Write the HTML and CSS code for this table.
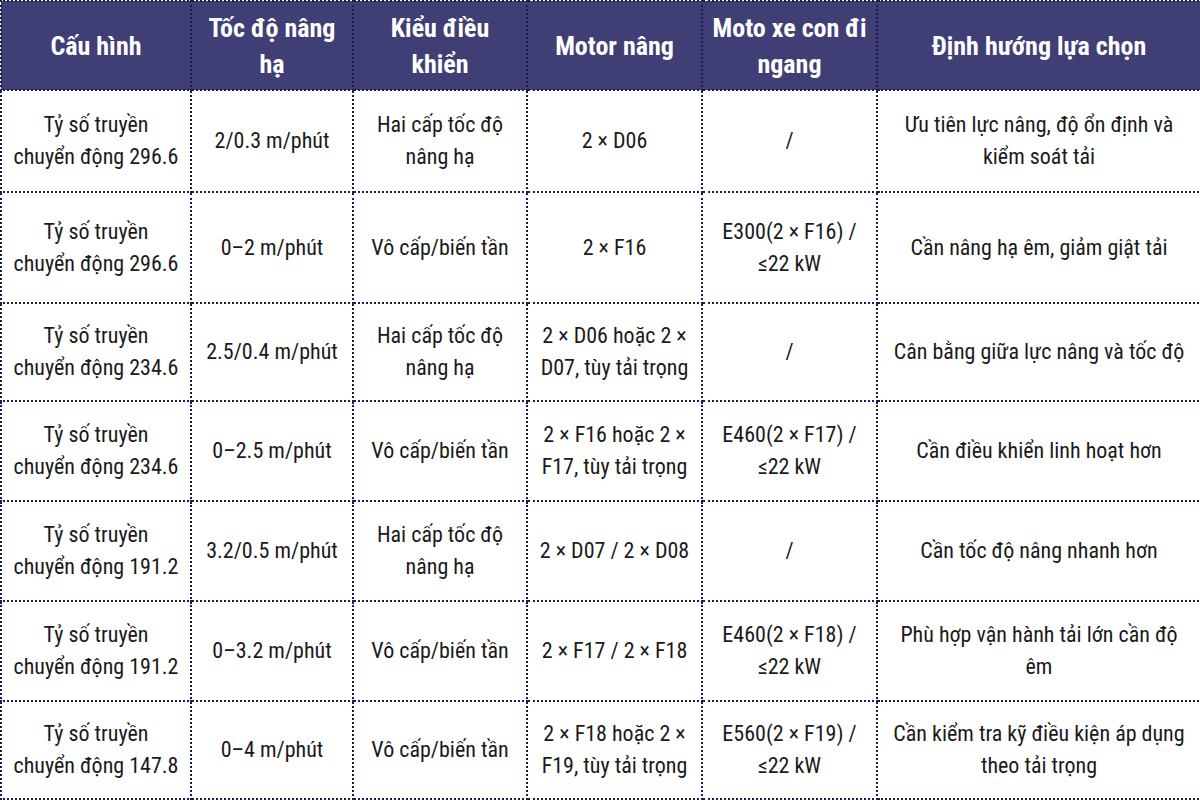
FILE: index.html
```html
<!DOCTYPE html>
<html lang="vi">
<head>
<meta charset="utf-8">
<link rel="stylesheet" href="styles.css">
</head>
<body>
<table class="spec">
  <colgroup>
    <col class="c1"><col class="c2"><col class="c3"><col class="c4"><col class="c5"><col class="c6">
  </colgroup>
  <thead>
    <tr>
      <th>Cấu hình</th>
      <th>Tốc độ nâng hạ</th>
      <th>Kiểu điều khiển</th>
      <th>Motor nâng</th>
      <th>Moto xe con đi ngang</th>
      <th>Định hướng lựa chọn</th>
    </tr>
  </thead>
  <tbody>
    <tr>
      <td>Tỷ số truyền <span class="nw">chuyển động 296.6</span></td>
      <td>2/0.3 m/phút</td>
      <td>Hai cấp tốc độ nâng hạ</td>
      <td>2 × D06</td>
      <td>/</td>
      <td>Ưu tiên lực nâng, độ ổn định và kiểm soát tải</td>
    </tr>
    <tr>
      <td>Tỷ số truyền <span class="nw">chuyển động 296.6</span></td>
      <td>0–2 m/phút</td>
      <td>Vô cấp/biến tần</td>
      <td>2 × F16</td>
      <td>E300(2 × F16) / ≤22 kW</td>
      <td>Cần nâng hạ êm, giảm giật tải</td>
    </tr>
    <tr>
      <td>Tỷ số truyền <span class="nw">chuyển động 234.6</span></td>
      <td>2.5/0.4 m/phút</td>
      <td>Hai cấp tốc độ nâng hạ</td>
      <td>2 × D06 hoặc 2 × D07, tùy tải trọng</td>
      <td>/</td>
      <td>Cân bằng giữa lực nâng và tốc độ</td>
    </tr>
    <tr>
      <td>Tỷ số truyền <span class="nw">chuyển động 234.6</span></td>
      <td>0–2.5 m/phút</td>
      <td>Vô cấp/biến tần</td>
      <td>2 × F16 hoặc 2 × F17, tùy tải trọng</td>
      <td>E460(2 × F17) / ≤22 kW</td>
      <td>Cần điều khiển linh hoạt hơn</td>
    </tr>
    <tr>
      <td>Tỷ số truyền <span class="nw">chuyển động 191.2</span></td>
      <td>3.2/0.5 m/phút</td>
      <td>Hai cấp tốc độ nâng hạ</td>
      <td>2 × D07 / 2 × D08</td>
      <td>/</td>
      <td>Cần tốc độ nâng nhanh hơn</td>
    </tr>
    <tr>
      <td>Tỷ số truyền <span class="nw">chuyển động 191.2</span></td>
      <td>0–3.2 m/phút</td>
      <td>Vô cấp/biến tần</td>
      <td>2 × F17 / 2 × F18</td>
      <td>E460(2 × F18) / ≤22 kW</td>
      <td>Phù hợp vận hành tải lớn cần độ êm</td>
    </tr>
    <tr>
      <td>Tỷ số truyền <span class="nw">chuyển động 147.8</span></td>
      <td>0–4 m/phút</td>
      <td>Vô cấp/biến tần</td>
      <td>2 × F18 hoặc 2 × F19, tùy tải trọng</td>
      <td>E560(2 × F19) / ≤22 kW</td>
      <td>Cần kiểm tra kỹ điều kiện áp dụng theo tải trọng</td>
    </tr>
  </tbody>
</table>
</body>
</html>
```

FILE: styles.css
```css
html, body {
  margin: 0;
  padding: 0;
  background: #ffffff;
}
body {
  width: 1200px;
  height: 800px;
  overflow: hidden;
  font-family: "Roboto Condensed", "Liberation Sans Narrow", Roboto, sans-serif;
  font-stretch: condensed;
  color: #1a1a1a;
}
.spec {
  width: 1200px;
  border-collapse: collapse;
  table-layout: fixed;
  background: #ffffff;
}
.c1 { width: 190px; }
.c2 { width: 162px; }
.c3 { width: 174px; }
.c4 { width: 175px; }
.c5 { width: 175px; }
.c6 { width: 324px; }
.spec th,
.spec td {
  border: 2px dotted #1c1c55;
  text-align: center;
  vertical-align: middle;
}
.spec th {
  background: #3f3f75;
  color: #ffffff;
  font-weight: 700;
  font-size: 26px;
  line-height: 36px;
  height: 87px;
  padding: 0 8px;
}
.spec td {
  font-size: 22px;
  line-height: 32px;
  height: 98px;
  font-weight: 400;
  padding: 0 8px;
}
.spec tbody tr:nth-child(1) td { height: 100px; }
.spec tbody tr:nth-child(2) td { height: 109px; }
.spec tbody tr:nth-child(3) td { height: 96px; }
.spec tbody tr:nth-child(7) td { height: 96px; }
.nw {
  white-space: nowrap;
}
```
